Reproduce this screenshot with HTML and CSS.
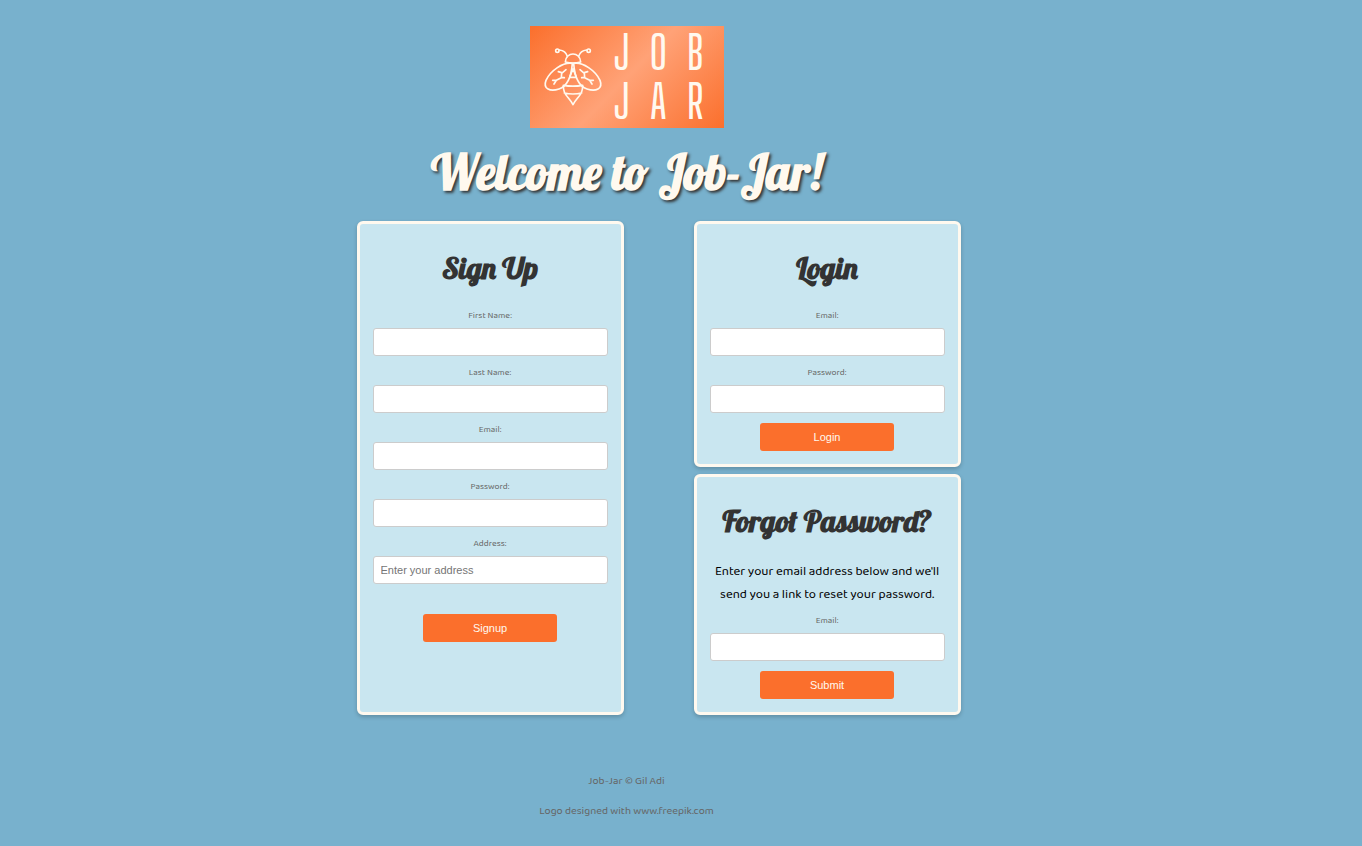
FILE: index.html
```html
<!DOCTYPE html>
<html lang="en">
<head>
  <meta charset="utf-8">
  <title>Job-Jar</title>
  <link rel="stylesheet" href="styles.css">
</head>
<body>
  <div class="page">
    <header class="header">
      <svg class="logo" viewBox="30 18 582 306" role="img" aria-label="Job Jar">
        <defs>
          <linearGradient id="glow" gradientUnits="userSpaceOnUse" x1="96" y1="-50" x2="546" y2="392">
            <stop offset="0" stop-color="#fb6f2c"/>
            <stop offset="0.5" stop-color="#ffa277"/>
            <stop offset="1" stop-color="#fb6f2c"/>
          </linearGradient>
        </defs>
        <rect x="30" y="18" width="582" height="306" fill="url(#glow)"/>
        <g class="bee">
          <path d="M136 126C137 94 181 94 182 126Q159 132 136 126"/>
          <path d="M142 109Q137 92 118 90M176 109Q181 92 200 90"/>
          <circle cx="112" cy="92" r="5"/>
          <circle cx="206" cy="92" r="5"/>
          <path d="M157 130C130 125 91 152 78 181C68 207 91 216 117 207C140 199 154 172 157 130Z"/>
          <path d="M161 130C188 125 227 152 240 181C250 207 227 216 201 207C178 199 164 172 161 130Z"/>
          <path d="M102 192L109 181L124 173L125 160L138 149M109 181L98 181M125 158L115 155M124 173L133 173"/>
          <path d="M216 192L209 181L194 173L193 160L180 149M209 181L220 181M193 158L203 155M194 173L185 173"/>
          <path d="M159 146L149 172H169Z"/>
          <path d="M130 196Q159 201 188 196C189 226 172 229 159 254C146 229 129 226 130 196ZM133 219Q159 225 185 219"/>
        </g>
        <g class="logo-text">
          <text x="305" y="151">J</text>
          <text x="415" y="151">O</text>
          <text x="526" y="151">B</text>
          <text x="305" y="298">J</text>
          <text x="415" y="298">A</text>
          <text x="526" y="298">R</text>
        </g>
      </svg>
      <h1 class="title">Welcome to Job-Jar!</h1>
    </header>

    <main class="forms">
      <form class="card signup">
        <h2 class="card-title">Sign Up</h2>
        <div class="field"><label for="first">First Name:</label><input id="first" type="text"></div>
        <div class="field"><label for="last">Last Name:</label><input id="last" type="text"></div>
        <div class="field"><label for="email">Email:</label><input id="email" type="email"></div>
        <div class="field"><label for="password">Password:</label><input id="password" type="password"></div>
        <div class="field"><label for="address">Address:</label><input id="address" type="text" placeholder="Enter your address"></div>
        <button class="button" type="submit">Signup</button>
      </form>

      <div class="column">
        <form class="card">
          <h2 class="card-title">Login</h2>
          <div class="field"><label for="login-email">Email:</label><input id="login-email" type="email"></div>
          <div class="field"><label for="login-password">Password:</label><input id="login-password" type="password"></div>
          <button class="button" type="submit">Login</button>
        </form>
        <form class="card">
          <h2 class="card-title">Forgot Password?</h2>
          <p class="hint">Enter your email address below and we'll send you a link to reset your password.</p>
          <div class="field"><label for="reset-email">Email:</label><input id="reset-email" type="email"></div>
          <button class="button" type="submit">Submit</button>
        </form>
      </div>
    </main>

    <footer class="footer">
      <p>Job-Jar © Gil Adi</p>
      <p>Logo designed with www.freepik.com</p>
    </footer>
  </div>
</body>
</html>
```
FILE: styles.css
```css
* {
  box-sizing: border-box;
}

body {
  margin: 0;
  background: #78b1cd;
  color: #000;
  font-family: "Baloo 2", "Noto Sans", sans-serif;
}

.page {
  padding: 26px 8% 20px 0;
}

.header {
  display: flex;
  flex-direction: column;
  align-items: center;
}

.logo {
  width: 194px;
  height: 102px;
}

.bee {
  fill: none;
  stroke: #fff9ef;
  stroke-width: 5;
  stroke-linecap: round;
  stroke-linejoin: round;
}

.logo-text {
  fill: #fff9ef;
  font-family: "Big Shoulders Display", "Bebas Neue", "Antonio", "Pathway Gothic One", "Roboto Condensed", sans-serif;
  font-size: 136px;
  font-weight: 500;
  text-anchor: middle;
}

.title,
.card-title {
  font-family: Lobster, "Liberation Serif", serif;
  font-weight: bold;
  text-align: center;
}

.title {
  margin: 14px 0 19px;
  color: #fff9ef;
  font-size: 48px;
  line-height: 60px;
  text-shadow: 2px 2px 3px #333;
}

.forms {
  display: flex;
  justify-content: center;
  gap: 70px;
  padding-left: 64px;
}

.column {
  display: flex;
  flex-direction: column;
  gap: 7px;
}

.card {
  display: flex;
  flex-direction: column;
  width: 267px;
  padding: 13px;
  border: 3px solid #fff9ef;
  border-radius: 6px;
  background: #c9e6f0;
  box-shadow: 0 2px 4px rgba(0, 0, 0, 0.2);
}

.card-title {
  margin: 11px 0 19px;
  color: #333;
  font-size: 30px;
  line-height: 40px;
  white-space: nowrap;
}

.hint {
  margin: 0 0 6px;
  font-size: 13px;
  line-height: 23px;
  text-align: center;
}

.field {
  display: flex;
  flex-direction: column;
  gap: 3px;
  margin-bottom: 8px;
}

.field label {
  color: #666;
  font-size: 9px;
  line-height: 18px;
  text-align: center;
}

.field input {
  width: 100%;
  height: 28px;
  padding: 0 7px;
  border: 1px solid #ccc;
  border-radius: 3px;
  background: #fff;
  font-family: Arial, "Liberation Sans", sans-serif;
  font-size: 11px;
}

.field input::placeholder {
  color: #757575;
}

.button {
  align-self: center;
  width: 134px;
  height: 28px;
  margin-top: 2px;
  padding: 0;
  border: 0;
  border-radius: 3px;
  background: #fb6f2c;
  color: #fff9ef;
  font-family: Arial, "Liberation Sans", sans-serif;
  font-size: 11px;
}

.signup .button {
  margin-top: 22px;
}

.footer {
  padding-top: 56px;
  color: #666;
  font-size: 11px;
  line-height: 20px;
  text-align: center;
}

.footer p {
  margin: 0 0 10px;
}
```
